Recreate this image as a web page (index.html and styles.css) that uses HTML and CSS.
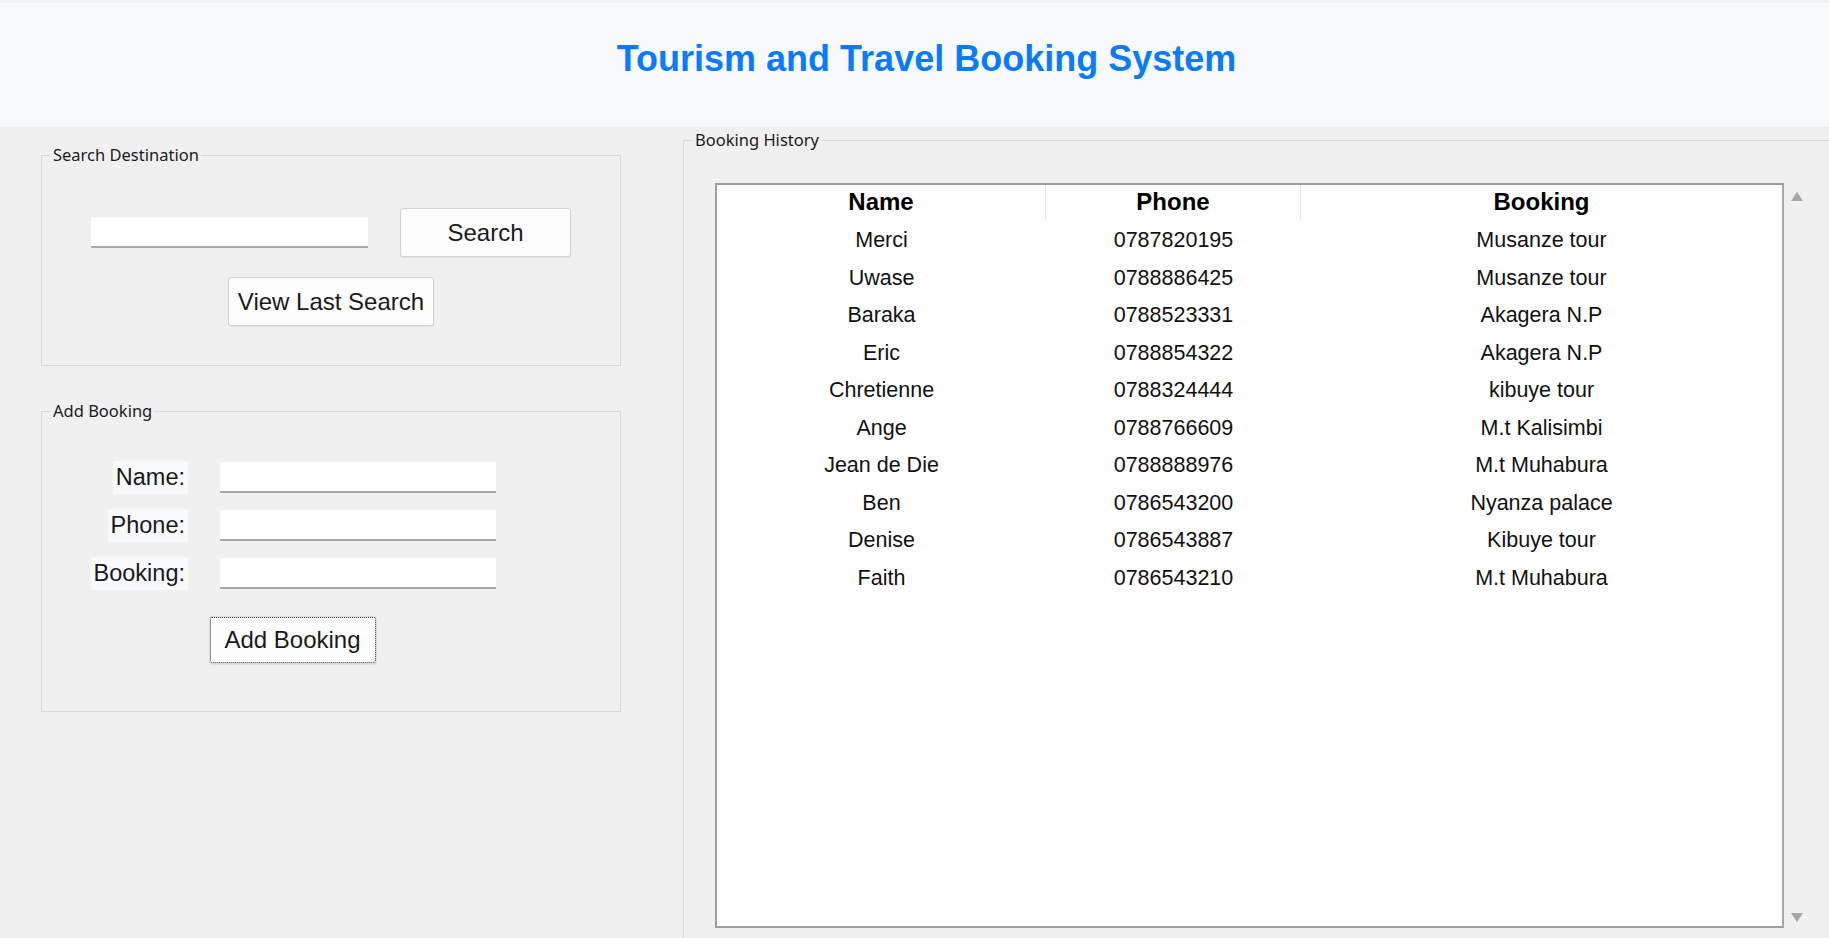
FILE: index.html
```html
<!DOCTYPE html>
<html lang="en">
<head>
<meta charset="utf-8">
<title>Tourism and Travel Booking System</title>
<link rel="stylesheet" href="styles.css">
</head>
<body>
<header class="topbar">
  <h1 class="title">Tourism and Travel Booking System</h1>
</header>
<main class="layout">
  <aside class="side">
    <fieldset class="group group-search">
      <legend class="group-label">Search Destination</legend>
      <div class="search-row">
        <input class="entry entry-search" type="text">
        <button class="btn btn-search" type="button">Search</button>
      </div>
      <div class="center-row">
        <button class="btn btn-last" type="button">View Last Search</button>
      </div>
    </fieldset>
    <fieldset class="group group-add">
      <legend class="group-label">Add Booking</legend>
      <div class="form-grid">
        <label class="field-label">Name:</label>
        <input class="entry" type="text">
        <label class="field-label">Phone:</label>
        <input class="entry" type="text">
        <label class="field-label">Booking:</label>
        <input class="entry" type="text">
        <button class="btn btn-add" type="button">Add Booking</button>
      </div>
    </fieldset>
  </aside>
  <section class="history">
    <fieldset class="group group-history">
      <legend class="group-label">Booking History</legend>
      <div class="tree-wrap">
        <div class="tree">
          <div class="tree-head">
            <div class="th sep">Name</div>
            <div class="th sep">Phone</div>
            <div class="th">Booking</div>
          </div>
          <div class="tree-row"><div>Merci</div><div>0787820195</div><div>Musanze tour</div></div>
          <div class="tree-row"><div>Uwase</div><div>0788886425</div><div>Musanze tour</div></div>
          <div class="tree-row"><div>Baraka</div><div>0788523331</div><div>Akagera N.P</div></div>
          <div class="tree-row"><div>Eric</div><div>0788854322</div><div>Akagera N.P</div></div>
          <div class="tree-row"><div>Chretienne</div><div>0788324444</div><div>kibuye tour</div></div>
          <div class="tree-row"><div>Ange</div><div>0788766609</div><div>M.t Kalisimbi</div></div>
          <div class="tree-row"><div>Jean de Die</div><div>0788888976</div><div>M.t Muhabura</div></div>
          <div class="tree-row"><div>Ben</div><div>0786543200</div><div>Nyanza palace</div></div>
          <div class="tree-row"><div>Denise</div><div>0786543887</div><div>Kibuye tour</div></div>
          <div class="tree-row"><div>Faith</div><div>0786543210</div><div>M.t Muhabura</div></div>
        </div>
        <div class="scrollbar">
          <span class="arrow arrow-up"></span>
          <span class="arrow arrow-down"></span>
        </div>
      </div>
    </fieldset>
  </section>
</main>
</body>
</html>
```

FILE: styles.css
```css
* { box-sizing: border-box; }

html, body {
  margin: 0;
  padding: 0;
  height: 938px;
  overflow: hidden;
}

body {
  background: #f0f0f0;
  font-family: "Liberation Sans", Arial, sans-serif;
  color: #111;
}

.topbar {
  height: 127px;
  background: #f8f9fa;
  border-top: 3px solid #ebf3f9;
  padding: 35px 0 0 24px;
  text-align: center;
}

.title {
  margin: 0;
  font-family: "Liberation Sans", Arial, sans-serif;
  font-weight: bold;
  font-size: 36px;
  line-height: 41px;
  color: #0b7bfd;
}

.layout {
  display: flex;
  align-items: flex-start;
}

.side {
  width: 683px;
  flex: none;
  padding-left: 41px;
}

.group {
  margin: 0;
  padding: 0;
  min-width: 0;
  border: 1px solid #d9d9d9;
}

.group-label {
  font-family: "Noto Sans", "Open Sans", sans-serif;
  font-size: 16.5px;
  line-height: 22px;
  color: #1b1b22;
  padding: 0 2px;
  margin-left: 9px;
}

.group-search {
  width: 580px;
  margin-top: 17px;
  padding: 42px 0 39px;
}

.search-row {
  display: flex;
  align-items: center;
  justify-content: center;
  gap: 32px;
}

.center-row {
  display: flex;
  justify-content: center;
  margin-top: 20px;
}

.entry {
  display: block;
  width: 276px;
  height: 31px;
  margin: 0;
  padding: 0 4px;
  background: #fff;
  border: none;
  border-bottom: 2px solid #aaaaaa;
  font-family: "Liberation Sans", Arial, sans-serif;
  font-size: 20px;
  outline: none;
}

.entry-search {
  width: 277px;
}

.btn {
  height: 49px;
  margin: 0;
  padding: 0;
  background: #fdfdfd;
  border: 1px solid #d2d2d2;
  border-radius: 3px;
  box-shadow: 0 1px 1px rgba(0, 0, 0, 0.06);
  font-family: "Liberation Sans", Arial, sans-serif;
  font-size: 24px;
  color: #1a1a1a;
}

.btn-search { width: 171px; }
.btn-last { width: 206px; }

.group-add {
  width: 580px;
  margin-top: 34px;
  padding: 39px 0 47px;
}

.form-grid {
  display: grid;
  grid-template-columns: 99px 276px;
  column-gap: 32px;
  row-gap: 15px;
  align-items: center;
  margin-left: 47px;
}

.field-label {
  justify-self: end;
  height: 33px;
  line-height: 33px;
  padding: 0 3px;
  background: #f8f9fa;
  font-size: 23.5px;
  color: #1a1a1a;
}

.btn-add {
  grid-column: 1 / -1;
  justify-self: center;
  width: 168px;
  height: 48px;
  margin-top: 11px;
  border-color: #dcdcdc;
  outline: 1px dotted #333;
  outline-offset: -2px;
}

.history {
  flex: 1;
  min-width: 0;
}

.group-history {
  margin-top: 2px;
  border-right: none;
  border-bottom: none;
  height: 820px;
  padding: 32px 0 0 0;
}

.tree-wrap {
  display: flex;
  align-items: stretch;
  margin-left: 31px;
}

.tree {
  width: 1069px;
  height: 745px;
  flex: none;
  background: #fff;
  border: 2px solid #9c9ea4;
  border-right-color: #a5a7ad;
}

.tree-head {
  display: grid;
  grid-template-columns: 329px 255px 1fr;
  height: 37px;
  padding-bottom: 3px;
}

.th {
  display: flex;
  align-items: center;
  justify-content: center;
  font-weight: bold;
  font-size: 24px;
  color: #000;
}

.th.sep {
  border-right: 1px solid #e6e6e6;
}

.tree-row {
  display: grid;
  grid-template-columns: 329px 255px 1fr;
  height: 37.5px;
  align-items: center;
  text-align: center;
  font-size: 21.5px;
  color: #111;
}

.scrollbar {
  width: 26px;
  flex: none;
  display: flex;
  flex-direction: column;
  justify-content: space-between;
  align-items: center;
  padding: 9px 0 6px;
}

.arrow {
  width: 0;
  height: 0;
  border-left: 6px solid transparent;
  border-right: 6px solid transparent;
}

.arrow-up {
  border-bottom: 9px solid #a6a6a6;
}

.arrow-down {
  border-top: 9px solid #a6a6a6;
}
```
